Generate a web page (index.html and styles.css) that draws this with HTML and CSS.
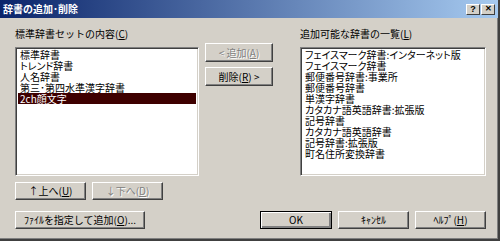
FILE: index.html
```html
<!DOCTYPE html>
<html lang="ja">

<head>
    <meta charset="UTF-8">
    <title>辞書の追加･削除</title>
    <link rel="stylesheet" href="styles.css">
</head>

<body>
    <div class="window">
        <!-- Title bar -->
        <div class="titlebar">
            <span class="title">辞書の追加･削除</span>
            <div class="title-buttons">
                <span class="title-btn">?</span>
                <span class="title-btn close-btn">&#x2715;</span>
            </div>
        </div>

        <div class="content">
            <div class="main-row">
                <div class="col-left">
                    <div class="label">標準辞書セットの内容(<u>C</u>)</div>
                    <ul class="listbox">
                        <li>標準辞書</li>
                        <li>トレンド辞書</li>
                        <li>人名辞書</li>
                        <li>第三･第四水準漢字辞書</li>
                        <li class="selected">2ch顔文字</li>
                    </ul>
                    <div class="move-row">
                        <button class="button move">&#8593;上へ(<u>U</u>)</button>
                        <button class="button move" disabled>&#8595;下へ(<u>D</u>)</button>
                    </div>
                </div>

                <div class="col-mid">
                    <button class="button mid" disabled>&lt; 追加(<u>A</u>)</button>
                    <button class="button mid">削除(<u>R</u>) &gt;</button>
                </div>

                <div class="col-right">
                    <div class="label">追加可能な辞書の一覧(<u>L</u>)</div>
                    <ul class="listbox">
                        <li>フェイスマーク辞書:インターネット版</li>
                        <li>フェイスマーク辞書</li>
                        <li>郵便番号辞書:事業所</li>
                        <li>郵便番号辞書</li>
                        <li>単漢字辞書</li>
                        <li>カタカナ語英語辞書:拡張版</li>
                        <li>記号辞書</li>
                        <li>カタカナ語英語辞書</li>
                        <li>記号辞書:拡張版</li>
                        <li>町名住所変換辞書</li>
                    </ul>
                </div>
            </div>

            <div class="bottom-row">
                <button class="button file">ﾌｧｲﾙを指定して追加(<u>O</u>)...</button>
                <div class="dialog-buttons">
                    <button class="button default">OK</button>
                    <button class="button">ｷｬﾝｾﾙ</button>
                    <button class="button">ﾍﾙﾌﾟ(<u>H</u>)</button>
                </div>
            </div>
        </div>
    </div>
</body>

</html>
```

FILE: styles.css
```css
body {
    margin: 0;
    font-family: "Noto Sans CJK JP", "Liberation Sans", sans-serif;
    font-size: 10px;
    color: #000;
    background-color: #d4d0c8;
}

.window {
    width: 498px;
    height: 239px;
    background-color: #d4d0c8;
    border-right: 2px solid #404040;
    border-bottom: 2px solid #404040;
    box-shadow: inset -1px -1px #808080;
}

/* Title bar */

.titlebar {
    height: 18px;
    display: flex;
    align-items: center;
    justify-content: space-between;
    padding: 0 3px;
    background: linear-gradient(to right, #0a246a, #a6caf0);
}

.title {
    color: #fff;
    font-weight: bold;
    font-size: 10px;
    line-height: 18px;
}

.title-buttons {
    display: flex;
    gap: 1px;
}

.title-btn {
    width: 14px;
    height: 11px;
    display: flex;
    align-items: center;
    justify-content: center;
    background-color: #d4d0c8;
    border: 1px solid;
    border-color: #fff #404040 #404040 #fff;
    box-sizing: border-box;
    font-family: "Liberation Sans", sans-serif;
    font-size: 9px;
    font-weight: bold;
    line-height: 1;
}

.close-btn {
    font-size: 8px;
}

/* Content */

.content {
    padding: 10px 0 0 15px;
    width: 471px;
}

.main-row {
    display: flex;
    align-items: flex-start;
}

.label {
    height: 12px;
    line-height: 12px;
    margin-bottom: 7px;
    white-space: nowrap;
}

.col-left {
    width: 184px;
}

.col-mid {
    display: flex;
    flex-direction: column;
    gap: 5px;
    margin: 15px 0 0 6px;
}

.col-right {
    width: 186px;
    margin-left: 27px;
}

.listbox {
    list-style: none;
    margin: 0;
    padding: 1px 2px;
    height: 129px;
    box-sizing: border-box;
    background-color: #fff;
    border: 1px solid;
    border-color: #808080 #fff #fff #808080;
    box-shadow: inset 1px 1px #404040, inset -1px -1px #d4d0c8;
    overflow: hidden;
    font-feature-settings: "palt";
}

.listbox li {
    height: 11px;
    line-height: 11px;
    padding-left: 2px;
    white-space: nowrap;
}

.listbox li.selected {
    background-color: #3e0000;
    color: #fff;
}

/* Buttons */

.button {
    height: 18px;
    padding: 0;
    font-family: inherit;
    font-size: 10px;
    line-height: 14px;
    color: #000;
    background-color: #d4d0c8;
    border: 1px solid;
    border-color: #fff #404040 #404040 #fff;
    box-shadow: inset -1px -1px #808080;
    white-space: nowrap;
    width: 71px;
}

.button:disabled {
    color: #808080;
    text-shadow: 1px 1px #fff;
}

.button.default {
    border: 1px solid #000;
    box-shadow: inset 1px 1px #fff, inset -2px -2px #808080;
    width: 72px;
}

.button.mid {
    width: 68px;
    height: 19px;
}

.move-row {
    display: flex;
    gap: 6px;
    margin-top: 6px;
}

.bottom-row {
    display: flex;
    justify-content: space-between;
    margin-top: 11px;
}

.button.file {
    width: 130px;
}

.dialog-buttons {
    display: flex;
    gap: 6px;
}
```
